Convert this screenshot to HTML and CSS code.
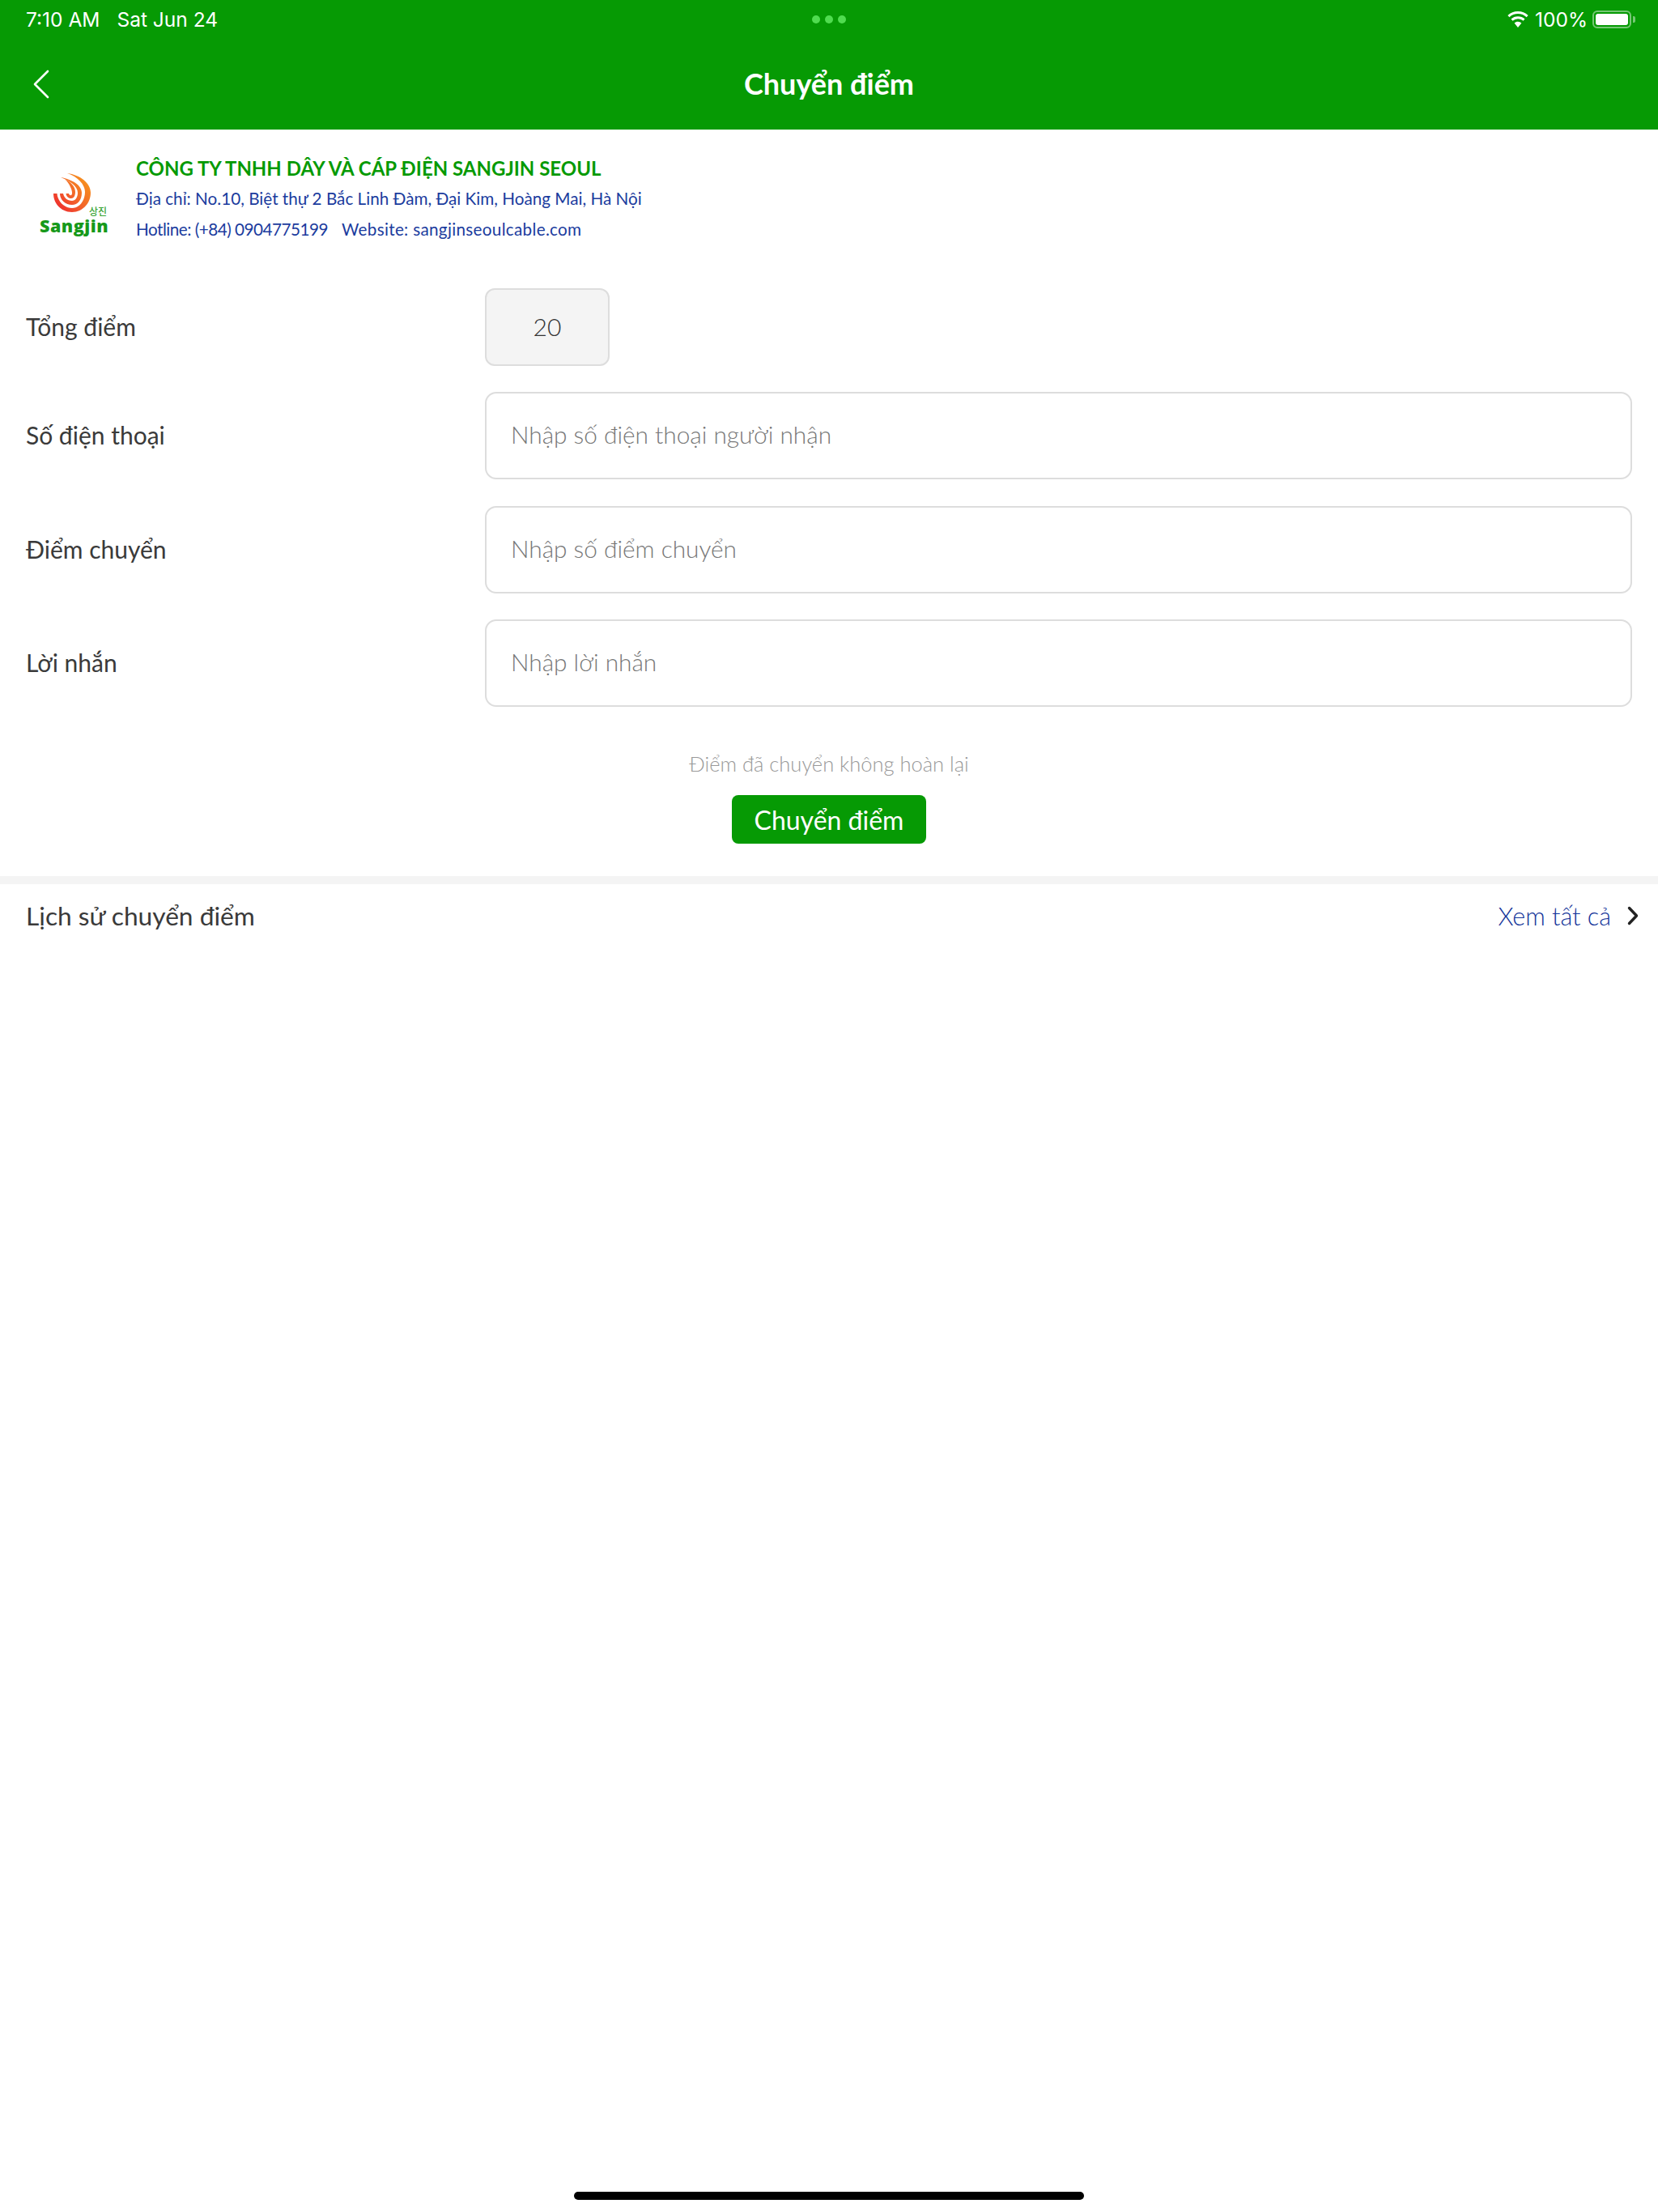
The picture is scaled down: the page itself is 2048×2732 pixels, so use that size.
FILE: index.html
```html
<!DOCTYPE html>
<html lang="vi">
<head>
<meta charset="utf-8">
<title>Chuyển điểm</title>
<link rel="stylesheet" href="styles.css">
</head>
<body>
<div class="app">
  <header class="header">
    <div class="status">
      <div class="status-left"><span>7:10 AM</span><span>Sat Jun 24</span></div>
      <div class="dots"><i></i><i></i><i></i></div>
      <div class="status-right">
        <svg class="wifi" width="28" height="21" viewBox="0 0 28 21"><path d="M14 3c4.100 0 7.800 1.600 10.600 4.200l2-2.200A18.300 18.300 0 0 0 14 0 18.300 18.300 0 0 0 1.400 5l2 2.200A15.500 15.500 0 0 1 14 3z" fill="#fff"/><path d="M14 9.200c2.500 0 4.800 1 6.500 2.500l2-2.200A12.600 12.600 0 0 0 14 6.200c-3.300 0-6.300 1.200-8.500 3.300l2 2.200A9.700 9.700 0 0 1 14 9.200z" fill="#fff"/><path d="M14 12.800c-1.700 0-3.200.6-4.400 1.700L14 20l4.400-5.500a6.500 6.500 0 0 0-4.400-1.700z" fill="#fff"/></svg>
        <span class="pct">100%</span>
        <span class="battery"><span class="battery-fill"></span></span>
        <span class="battery-cap"></span>
      </div>
    </div>
    <div class="navbar">
      <svg class="back" width="20" height="36" viewBox="0 0 20 36"><path d="M18 2 2 18l16 16" fill="none" stroke="#fff" stroke-width="2.600" stroke-linecap="round" stroke-linejoin="round"/></svg>
      <h1>Chuyển điểm</h1>
    </div>
  </header>

  <section class="company">
    <div class="logo">
      <svg class="logo-mark" width="46" height="49" viewBox="0 0 46 49">
        <defs><linearGradient id="g" gradientUnits="userSpaceOnUse" x1="4" y1="44" x2="42" y2="8"><stop offset="0" stop-color="#ee2a2e"/><stop offset=".45" stop-color="#f2602a"/><stop offset="1" stop-color="#f7931e"/></linearGradient></defs>
        <g fill="url(#g)">
          <path d="M17 0C33 2 46 12 46 24C46 38 35 48 23 48C10 48 0 38 0 25L4.500 25C5 34 13 43 23 43C32 43 39 34 39 23C39 14 30 4 17 0Z"/>
          <path d="M9 5C24 8 35 15 35 24C35 33 30 39 23 39C15 39 8 33 8 25L12 25C13 30 17 34 23 34C27 34 30 30 30 24C30 16 20 9 9 5Z"/>
          <path d="M14 7C22 11 27 17 27 23C27 28 25 31 22 31C19 31 16 29 15.500 25L19 25C19.500 27 21 27.500 22 27C24 26 23 21 21 17C19.500 13 17 10 14 7Z"/>
        </g>
      </svg>
      <span class="logo-ko">상진</span>
      <span class="logo-name">Sangjin</span>
    </div>
    <div class="company-info">
      <div class="company-name">CÔNG TY TNHH DÂY VÀ CÁP ĐIỆN SANGJIN SEOUL</div>
      <div class="company-line">Địa chỉ: No.10, Biệt thự 2 Bắc Linh Đàm, Đại Kim, Hoàng Mai, Hà Nội</div>
      <div class="company-line"><span class="hotline">Hotline: (+84) 0904775199</span><span class="website">Website: sangjinseoulcable.com</span></div>
    </div>
  </section>

  <form class="form">
    <div class="row row-total">
      <label>Tổng điểm</label>
      <div class="total">20</div>
    </div>
    <div class="row">
      <label>Số điện thoại</label>
      <div class="field">Nhập số điện thoại người nhận</div>
    </div>
    <div class="row">
      <label>Điểm chuyển</label>
      <div class="field">Nhập số điểm chuyển</div>
    </div>
    <div class="row">
      <label>Lời nhắn</label>
      <div class="field">Nhập lời nhắn</div>
    </div>
    <p class="note">Điểm đã chuyển không hoàn lại</p>
    <div class="submit"><span>Chuyển điểm</span></div>
  </form>

  <div class="divider"></div>

  <section class="history">
    <span class="history-title">Lịch sử chuyển điểm</span>
    <span class="history-link">Xem tất cả
      <svg width="14" height="24" viewBox="0 0 14 24"><path d="M2.500 2.500 11.500 12l-9 9.500" fill="none" stroke="#222" stroke-width="3.400" stroke-linecap="round" stroke-linejoin="round"/></svg>
    </span>
  </section>

  <div class="home-bar"></div>
</div>
</body>
</html>
```
FILE: styles.css
```css
* { box-sizing: border-box; }
html, body { margin: 0; padding: 0; }
body { background: #fff; font-family: "Lato", "Noto Sans", sans-serif; color: #333; }
.app { width: 2048px; height: 2732px; display: flex; flex-direction: column; position: relative; }

.header { background: #069a04; height: 160px; color: #fff; display: flex; flex-direction: column; }
.status { height: 48px; display: flex; align-items: center; justify-content: space-between; padding: 0 28px 0 32px; font-family: "Inter", "Liberation Sans", sans-serif; font-size: 24.5px; position: relative; }
.status-left { display: flex; gap: 21px; }
.dots { position: absolute; left: 1003px; top: 19px; display: flex; gap: 6px; }
.dots i { width: 10px; height: 10px; border-radius: 50%; background: #50dc50; display: block; }
.status-right { display: flex; align-items: center; }
.wifi { margin-right: 7px; }
.pct { margin-right: 6px; }
.battery { width: 48px; height: 22px; border: 2px solid rgba(255,255,255,.45); border-radius: 6px; padding: 2px; display: block; }
.battery-fill { display: block; width: 100%; height: 100%; background: #fff; border-radius: 3px; }
.battery-cap { width: 3px; height: 8px; background: rgba(255,255,255,.45); margin-left: 2px; border-radius: 0 2px 2px 0; }
.navbar { flex: 1; display: flex; align-items: center; justify-content: center; position: relative; padding-bottom: 2px; }
.navbar h1 { margin: 0; font-size: 36px; font-weight: 700; color: #fff; }
.back { position: absolute; left: 41px; top: 38px; }

.company { display: flex; align-items: flex-start; padding: 30px 0 0 42px; height: 182px; }
.logo { width: 126px; height: 100px; position: relative; flex: none; }
.logo-mark { position: absolute; left: 24px; top: 24px; }
.logo-ko { position: absolute; left: 68px; top: 64px; font-family: "Noto Sans CJK KR", sans-serif; font-weight: 500; font-size: 12px; line-height: 14px; color: #3aa535; }
.logo-name { position: absolute; left: 7px; top: 78px; font-family: "Open Sans", sans-serif; font-weight: 800; font-size: 21.5px; line-height: 22px; color: #16991a; letter-spacing: .5px; }
.company-info { padding-top: 0; }
.company-name { color: #069a04; font-weight: 700; font-size: 24px; line-height: 36px; white-space: nowrap; }
.company-line { color: #1b3c9e; font-size: 20.700px; line-height: 38px; white-space: nowrap; }
.hotline { margin-right: 17px; letter-spacing: -.5px; }
.website { letter-spacing: .3px; }

.form { padding: 0 32px; display: flex; flex-direction: column; }
.row { display: flex; align-items: center; margin-bottom: 32.500px; height: 108px; }
.row-total { height: 96px; margin-top: 14px; margin-bottom: 32px; }
.row label { width: 567px; font-size: 30px; color: #3a3a3a; flex: none; padding-bottom: 2px; }
.total { width: 154px; height: 96px; background: #f4f4f4; border: 2px solid #ddd; border-radius: 12px; padding-bottom: 2px; display: flex; align-items: center; justify-content: center; font-size: 30px; color: #333; font-weight: 300; }
.field { flex: 1; height: 108px; border: 2px solid #ddd; border-radius: 14px; padding: 0 30px 3px; display: flex; align-items: center; font-size: 29.800px; font-weight: 300; color: #777; }
.note { margin: 17.500px 0 19px; text-align: center; font-size: 25.500px; line-height: 40px; color: #999; font-weight: 300; }
.submit { align-self: center; width: 240px; height: 60px; background: #069a04; border-radius: 8px; color: #fff; font-size: 32px; display: flex; align-items: center; justify-content: center; }

.divider { height: 10px; background: #f4f4f4; margin-top: 40px; }
.history { display: flex; align-items: center; justify-content: space-between; padding: 0 24px 0 32px; height: 78px; }
.history-title { font-size: 31.700px; color: #3a3a3a; }
.history-link { font-size: 30.500px; color: #14359a; font-weight: 300; display: flex; align-items: center; gap: 20px; }
.home-bar { position: absolute; left: 709px; top: 2707px; width: 630px; height: 10px; border-radius: 5px; background: #000; }
```
